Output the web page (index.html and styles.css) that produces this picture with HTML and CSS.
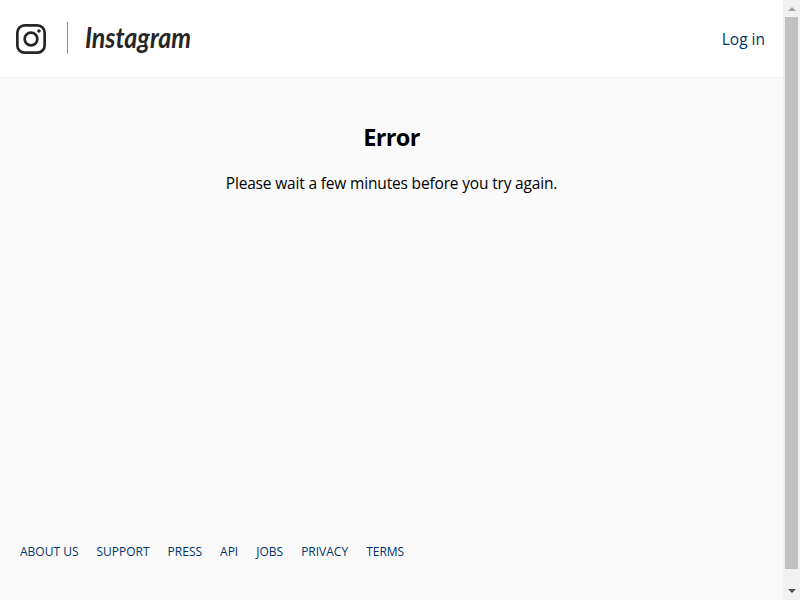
FILE: index.html
```html
<!DOCTYPE html>
<html lang="en">
<head>
<meta charset="utf-8">
<title>Instagram</title>
<link rel="stylesheet" href="styles.css">
</head>
<body>
<div class="page">
  <header class="header">
    <a class="brand" href="#">
      <svg class="camera" viewBox="0 0 30 30" width="30" height="30">
        <rect x="1.35" y="1.35" width="27.3" height="27.3" rx="7.2"/>
        <circle cx="15" cy="15" r="6.35"/>
        <circle class="dot" cx="23" cy="7" r="1.8"/>
      </svg>
      <span class="divider"></span>
      <svg class="wordmark" width="108" height="36" viewBox="0 0 108 36">
        <text x="1" y="27" textLength="106" lengthAdjust="spacingAndGlyphs">Instagram</text>
      </svg>
    </a>
    <a class="login" href="#">Log in</a>
  </header>
  <main class="content">
    <h2>Error</h2>
    <p>Please wait a few minutes before you try again.</p>
  </main>
  <nav class="footer">
    <a href="#">About us</a>
    <a href="#">Support</a>
    <a href="#">Press</a>
    <a href="#">API</a>
    <a href="#">Jobs</a>
    <a href="#">Privacy</a>
    <a href="#">Terms</a>
  </nav>
</div>
<div class="scrollbar">
  <span class="arrow up"></span>
  <span class="thumb"></span>
  <span class="arrow down"></span>
</div>
</body>
</html>
```
FILE: styles.css
```css
* { box-sizing: border-box; }
body {
  margin: 0;
  height: 600px;
  display: flex;
  overflow: hidden;
  background: #fafafa;
  color: #000;
  font: 400 15.5px/22px "Open Sans", "Noto Sans", sans-serif;
}
a { color: #003569; text-decoration: none; }
.page { flex: 1; display: flex; flex-direction: column; }
.header {
  height: 78px;
  padding: 0 18px 0 16px;
  display: flex;
  align-items: center;
  justify-content: space-between;
  background: #fff;
  border-bottom: 1px solid #efefef;
}
.brand { display: flex; align-items: center; }
.camera { fill: none; stroke: #262626; stroke-width: 2.7; }
.camera .dot { fill: #262626; stroke: none; }
.divider { width: 1px; height: 32px; margin: -2px 16px 0 21px; background: #8e8e8e; }
.wordmark { overflow: visible; }
.wordmark text {
  fill: #262626;
  font: italic 700 29px "Lato", sans-serif;
}
.login { padding-top: 1px; }
.content { flex: 1; padding-top: 43px; text-align: center; }
h2 { margin: 0; font-size: 23.5px; line-height: 32px; font-weight: 700; letter-spacing: -0.6px; }
p { margin: 19px 0 0; letter-spacing: -0.17px; }
.footer {
  display: flex;
  gap: 18px;
  height: 58px;
  padding-left: 20px;
  font-size: 12px;
  line-height: 20px;
  text-transform: uppercase;
}
.scrollbar { width: 17px; display: flex; flex-direction: column; align-items: center; background: #f1f1f1; }
.arrow { width: 17px; height: 17px; display: flex; align-items: center; justify-content: center; }
.arrow::after { content: ""; border: 4px solid transparent; border-top-width: 0; border-bottom-width: 0; }
.up::after { border-bottom: 4px solid #a3a3a3; }
.down::after { border-top: 4px solid #505050; }
.thumb { width: 13px; height: 552px; margin-bottom: 13px; background: #c1c1c1; }
```
